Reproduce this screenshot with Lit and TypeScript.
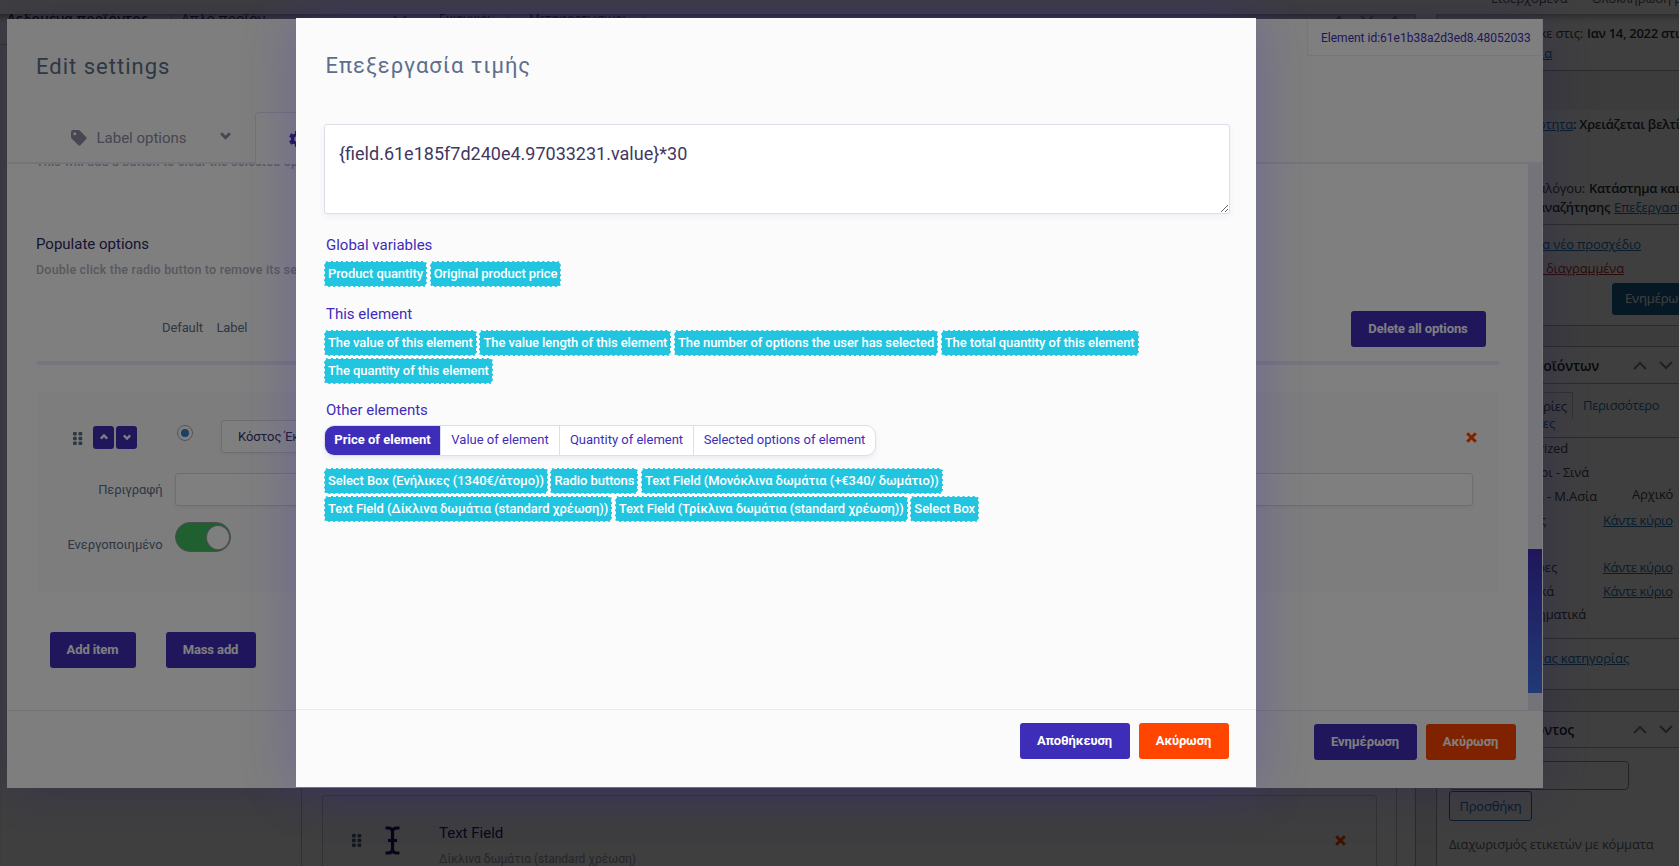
import { LitElement, html, css, svg, nothing } from "lit";
import { customElement } from "lit/decorators.js";

const chevron = (dir: "up" | "down", size = 10, width = 2.4) => html`
  <svg width=${size} height=${size} viewBox="0 0 10 10" fill="none" stroke="currentColor" stroke-width=${width}>
    ${dir === "up" ? svg`<path d="M1 7 L5 3 L9 7"/>` : svg`<path d="M1 3 L5 7 L9 3"/>`}
  </svg>`;

const wideChevron = (dir: "up" | "down") => html`
  <svg width="14" height="9" viewBox="0 0 14 9" fill="none" stroke="currentColor" stroke-width="2">
    ${dir === "up" ? svg`<path d="M1 8 L7 2 L13 8"/>` : svg`<path d="M1 1 L7 7 L13 1"/>`}
  </svg>`;

const dots = html`
  <svg width="10" height="13" viewBox="0 0 10 13" fill="currentColor">
    ${[0, 4.7, 9.4].map((y) => [0, 5.5].map((x) => svg`<rect x=${x} y=${y} width="3.8" height="3.6" rx="1"/>`))}
  </svg>`;

const cross = html`
  <svg width="11" height="11" viewBox="0 0 11 11" fill="none" stroke="currentColor" stroke-width="3">
    <path d="M1.2 1.2 L9.8 9.8 M9.8 1.2 L1.2 9.8"/>
  </svg>`;

type Row = {
  kind?: "line" | "gap";
  gap: number;
  h?: number;
  end?: number;
  frag?: string;
  fragCls?: string;
  offset?: number;
  next?: string;
  nextCls?: string;
};

const publishRows: Row[] = [
  { gap: 10, end: 146, frag: "κε στις:", offset: 4, next: "Ιαν 14, 2022 στις", nextCls: "strong" },
  { gap: 2, end: 115, frag: "Επεξεργασία", fragCls: "link" },
  { kind: "line", gap: 8 },
  { kind: "gap", gap: 0, h: 39 },
  { gap: 5, end: 136, frag: "Αναγνωσιμότητα", fragCls: "link", offset: 0, next: ": Χρειάζεται βελτίωση", nextCls: "strong" },
  { gap: 46, end: 148, frag: "καταλόγου:", offset: 4, next: "Κατάστημα και", nextCls: "strong" },
  { gap: 1, end: 173, frag: "αναζήτησης", fragCls: "strong", offset: 4, next: "Επεξεργασία", nextCls: "link" },
  { kind: "line", gap: 8 },
  { gap: 10, end: 204, frag: "Αντιγραφή σε ένα νέο προσχέδιο", fragCls: "link" },
  { gap: 6, end: 187, frag: "Μετακίνηση στα διαγραμμένα", fragCls: "danger" },
];

const categoryRows: Row[] = [
  { gap: 0, end: 118, frag: "χρησιμοποιούμενες", fragCls: "plain" },
  { kind: "line", gap: 5 },
  { gap: 1, end: 131, frag: "Uncategorized" },
  { gap: 6, end: 152, frag: "Προορισμοι - Σινά" },
  { gap: 6, end: 160, frag: "Αφρική - Μ.Ασία", fragCls: "medium", offset: 35, next: "Αρχικό", nextCls: "raised" },
  { gap: 6, end: 109, frag: "Χώρες", offset: 57, next: "Κάντε κύριο", nextCls: "link tight" },
  { gap: 29, end: 120, frag: "Ημέρες", offset: 46, next: "Κάντε κύριο", nextCls: "link tight" },
  { gap: 6, end: 117, frag: "Οδικά", offset: 49, next: "Κάντε κύριο", nextCls: "link tight" },
  { gap: 5, end: 149, frag: "Θεματικά ηματικά" },
  { kind: "line", gap: 15 },
  { gap: 10, end: 192, frag: "Προσθήκη νέας κατηγορίας", fragCls: "link medium" },
];

@customElement("product-page")
class ProductPage extends LitElement {
  static styles = css`
    :host { display: block; height: 866px; overflow: hidden; background: #f0f0f1; font: 13px "Open Sans", "Noto Sans", sans-serif; color: #3c434a; }
    .toolbar { height: 14px; background: #fff; overflow: hidden; display: flex; gap: 24px; padding-left: 1491px; white-space: nowrap; color: #50575e; letter-spacing: -.1px; }
    .toolbar span { margin-top: -11px; line-height: 18px; }
    .columns { display: grid; grid-template-columns: 1416px 1fr; column-gap: 20px; height: 852px; }
    .main { border-right: 1px solid #a9aaae; background: #fff; display: flex; flex-direction: column; justify-content: space-between; overflow: hidden; box-shadow: inset 0 8px 8px -6px rgba(0,0,0,.5); }
    .head { display: flex; box-sizing: border-box; height: 41px; white-space: nowrap; color: #1d2327; font-size: 14px; line-height: 16px; padding-bottom: 10px; margin-top: -10px; border-bottom: 1px solid #c3c4c7; align-items: center; }
    .head .title { font-weight: 600; width: 164px; padding-left: 7px; }
    .head .field { border-left: 1px solid #8c8f94; padding-left: 9px; width: 212px; }
    .head .dim { color: #50575e; width: 18px; }
    .head .box { border-left: 1px solid #8c8f94; width: 27px; }
    .head .opt { width: 54px; border-right: 1px solid #8c8f94; font-size: 12px; }
    .head .opt.wide { width: 114px; margin-left: 14px; padding-left: 20px; border-left: 1px solid #8c8f94; }
    .head .tools { margin-left: auto; display: flex; gap: 14px; padding-right: 13px; color: #787c82; }
    .builder { margin: 0 18px 0 301px; border: 1px solid #c3c4c7; border-bottom: 0; height: 140px; padding: 0 19px 0 20px; display: flex; align-items: flex-end; background: #fff; }
    .item { flex: 1; height: 70px; border: 1px solid #c9cacf; border-bottom: 0; border-radius: 4px 4px 0 0; display: flex; font-family: Roboto, sans-serif; background: #fcfcfd; }
    .item .grip { margin: 38px 23px 0 29px; color: #50607a; }
    .item .glyph { margin: 30px 39px 0 0; color: #1b1464; }
    .item .text { flex: 1; padding-top: 27px; }
    .item .name { font-size: 15px; line-height: 20px; color: #2a1f72; }
    .item .sub { font-size: 12px; line-height: 20px; margin-top: 6px; color: #9a99a8; white-space: nowrap; }
    .item .del { color: #ff4500; margin: 38px 30px 0 0; }
    .side { border-left: 1px solid #a9aaae; background: #fff; white-space: nowrap; overflow: hidden; box-shadow: inset 0 8px 8px -6px rgba(0,0,0,.4); letter-spacing: -.16px; }
    .row { display: flex; height: 18px; line-height: 18px; }
    .frag { display: flex; justify-content: flex-end; flex: none; }
    .line { height: 1px; background: #a9aaae; }
    .band { background: #f0f0f1; }
    .strong { font-weight: 600; color: #2c3338; letter-spacing: -.3px; }
    .medium { font-weight: 500; }
    .link { color: #2271b1; text-decoration: underline; }
    .tight { letter-spacing: -.35px; }
    .plain { color: #2271b1; }
    .danger { color: #b32d2e; text-decoration: underline; }
    .raised { margin-top: -2px; }
    .update { margin: 6px 0 10px 175px; height: 32px; line-height: 31px; padding-left: 13px; background: #1d6096; color: #fff; border-radius: 3px 0 0 3px; }
    .boxhead { display: flex; align-items: center; font-size: 14px; font-weight: 600; color: #1d2327; }
    .boxhead .arrows { display: flex; gap: 12px; color: #787c82; }
    .tabs { display: flex; height: 22px; margin-top: 8px; }
    .tab { height: 27px; line-height: 26px; border: 1px solid #c3c4c7; border-bottom: 0; width: 136px; box-sizing: border-box; display: flex; justify-content: flex-end; padding-right: 5px; margin-right: 10px; }
    .tabs .plain { line-height: 27px; letter-spacing: -.3px; }
    .input { margin: 13px 0 0 12px; width: 178px; height: 27px; border: 1px solid #8c8f94; border-radius: 4px; }
    .add { margin: 1px 0 14px 12px; width: 81px; height: 28px; line-height: 28px; border: 1px solid #2271b1; border-radius: 3px; color: #2271b1; text-align: center; }
    .hint { padding-left: 12px; line-height: 18px; color: #646970; }
  `;

  row(r: Row) {
    const style = `margin-top:${r.gap}px`;
    if (r.kind === "line") return html`<div class="line" style=${style}></div>`;
    if (r.kind === "gap") return html`<div class="band" style="height:${r.h}px"></div>`;
    return html`<div class="row" style=${style}>
      <div class="frag" style="width:${r.end}px"><span class=${r.fragCls ?? ""}>${r.frag}</span></div>
      ${r.next ? html`<span class=${r.nextCls ?? ""} style="margin-left:${r.offset}px">${r.next}</span>` : nothing}
    </div>`;
  }

  boxHead(text: string, end: number, height: number, arrows: number) {
    return html`<div class="boxhead" style="height:${height}px">
      <div class="frag" style="width:${end}px">${text}</div>
      <div class="arrows" style="margin-left:${arrows}px">${wideChevron("up")}${wideChevron("down")}</div>
    </div>`;
  }

  render() {
    return html`
      <div class="toolbar"><span>Εισερχόμενα</span><span>Ολοκλήρωση βιτρίνας</span></div>
      <div class="columns">
        <div class="main">
          <div class="head">
            <span class="title">Δεδομένα προϊόντος —</span>
            <span class="field">Απλό προϊόν</span>
            <span class="dim">${wideChevron("down")}</span>
            <span class="box"></span>
            <span class="opt">Εικονικό:</span>
            <span class="opt wide">Μεταφορτώσιμο:</span>
            <span class="tools">${wideChevron("up")}${wideChevron("down")}${wideChevron("up")}</span>
          </div>
          <div class="builder">
            <div class="item">
              <span class="grip">${dots}</span>
              <span class="glyph">
                <svg width="15" height="29" viewBox="0 0 15 29" fill="none" stroke="currentColor" stroke-width="3.2">
                  <path d="M0.5 2 H3 Q7.5 2 7.5 6 Q7.5 2 12 2 H14.5 M7.5 5 V24 M0.5 27 H3 Q7.5 27 7.5 23 Q7.5 27 12 27 H14.5 M3 14.5 H12"/>
                </svg>
              </span>
              <div class="text">
                <div class="name">Text Field</div>
                <div class="sub">Δίκλινα δωμάτια (standard χρέωση)</div>
              </div>
              <span class="del">${cross}</span>
            </div>
          </div>
        </div>
        <div class="side">
          ${publishRows.map((r) => this.row(r))}
          <div class="update">Ενημέρωση</div>
          <div class="line"></div>
          <div class="band" style="height:20px"></div>
          <div class="line"></div>
          ${this.boxHead("Κατηγορίες προϊόντων", 162, 36, 34)}
          <div class="line"></div>
          <div class="tabs"><div class="tab">Όλες οι κατηγορίες</div><span class="plain">Περισσότερο</span></div>
          ${categoryRows.map((r) => this.row(r))}
          <div class="line" style="margin-top:22px"></div>
          <div class="band" style="height:21px"></div>
          <div class="line"></div>
          ${this.boxHead("Ετικέτες προϊόντος", 137, 35, 59)}
          <div class="line"></div>
          <div class="input"></div>
          <div class="add">Προσθήκη</div>
          <div class="hint">Διαχωρισμός ετικετών με κόμματα</div>
        </div>
      </div>
    `;
  }
}

const buttonStyles = css`
  .btn { display: inline-flex; align-items: center; justify-content: center; height: 36px; box-sizing: border-box; border-radius: 3px; background: #3e2db8; color: #fff; font-size: 13px; font-weight: 700; letter-spacing: -0.12px; padding-bottom: 1px; padding-right: 1px; }
  .btn.cancel { background: #ff4500; }
`;

@customElement("settings-panel")
class SettingsPanel extends LitElement {
  static styles = [buttonStyles, css`
    :host { display: flex; flex-direction: column; width: 1536px; height: 769px; background: #fdfdfd; font: 13px/20px Roboto, sans-serif; color: #5d6f87; box-shadow: 0 0 50px rgba(62,45,184,.3); overflow: hidden; }
    .header { height: 93px; display: flex; justify-content: space-between; background: #fdfdfd; flex: none; }
    .title { font-size: 22px; line-height: 26px; letter-spacing: 1px; padding: 35px 0 0 29px; color: #5d6f87; }
    .ident { height: 37px; line-height: 38px; font-size: 12px; letter-spacing: 0; border: 1px solid #eeedf4; border-top: 0; box-sizing: border-box; width: 236px; padding-left: 13px; color: #3e2db8; background: #fff; white-space: nowrap; }
    .tabs { height: 50px; display: flex; border-bottom: 2px solid #ebe9f5; flex: none; color: #8f8ca4; font-size: 15px; }
    .tab { display: flex; align-items: center; width: 184px; padding-left: 64px; padding-top: 1px; }
    .tab .name { margin-left: 9.5px; width: 123px; }
    .tab .name + svg { margin-top: -4px; }
    .tab.on { border: 1px solid #e4e2f2; border-bottom: 0; border-radius: 4px 0 0 0; background: #fff; color: #3e2db8; margin-bottom: -2px; padding-left: 33px; }
    .body { flex: 1; display: flex; background: #fff; min-height: 0; }
    .content { flex: 1; min-width: 0; padding: 0 29px 0 30px; overflow: hidden; }
    .note { color: #b1b0bd; font-size: 12.5px; font-weight: 500; letter-spacing: .2px; white-space: nowrap; margin-left: -1px; }
    .clip { margin-top: -12px; }
    .subtitle { color: #2e2860; font-size: 15px; margin: 62px 0 0 -1px; }
    .tools { height: 36px; display: flex; margin-top: 31px; padding: 0 13px 0 125px; }
    .tools span { line-height: 20px; padding-top: 7px; margin-right: 13.5px; font-weight: 400; letter-spacing: -.1px; }
    .tools .btn { margin-left: auto; width: 135px; }
    .rule { height: 4px; background: #eeebfa; margin-top: 14px; }
    .panel { margin-top: 27px; background: #fbfbfc; height: 201px; box-sizing: border-box; padding-top: 28px; display: flex; flex-direction: column; gap: 20px; }
    .line { display: flex; height: 33px; align-items: center; }
    .grip { margin: 3px 10px 0 36px; display: flex; }
    .mini { width: 21px; height: 23px; background: #3e2db8; color: #fff; border-radius: 3px; margin: 1px 2px 0 0; display: flex; align-items: center; justify-content: center; }
    .radio { width: 14px; height: 14px; border: 1px solid #aaa; border-radius: 50%; margin: -7px 28px 0 38px; display: flex; align-items: center; justify-content: center; background: #fff; }
    .radio i { width: 8px; height: 8px; border-radius: 50%; background: #3582c4; }
    .input { flex: 1; height: 33px; box-sizing: border-box; border: 1px solid #dcdbe6; border-radius: 3px; background: #fff; box-shadow: 0 2px 4px rgba(60,60,100,.06); color: #3a3462; font-size: 13px; letter-spacing: -.1px; padding: 6px 0 0 16px; margin-right: 26px; }
    .del { color: #ff4500; margin: 2px 22px 0 0; display: flex; }
    .short { flex: 0 0 400px; margin-right: auto; }
    .label { width: 125.5px; text-align: right; margin-right: 12.5px; letter-spacing: -.1px; }
    .label.low { padding-top: 5px; }
    .switch { width: 56px; height: 30px; box-sizing: border-box; border: 1px solid #999; border-radius: 15px; background: #3ebe60; display: flex; justify-content: flex-end; align-items: center; margin-top: -11px; }
    .switch i { width: 24px; height: 25px; border-radius: 50%; background: #fff; border: 1px solid #999; box-sizing: border-box; }
    .actions { display: flex; gap: 30px; padding: 39px 13px 0; }
    .track { width: 14px; background: #e9e7f2; margin-right: 1px; display: flex; flex-direction: column; justify-content: flex-end; }
    .thumb { height: 144px; margin-bottom: 17px; background: linear-gradient(#3e2db8, #4374ea); }
    .footer { height: 78px; flex: none; background: #fdfdfd; border-top: 1px solid #e6e5ec; display: flex; justify-content: flex-end; gap: 9px; padding: 13px 27px 0 0; box-sizing: border-box; }
  `];

  render() {
    return html`
      <div class="header">
        <div class="title">Edit settings</div>
        <div class="ident">Element id:61e1b38a2d3ed8.48052033</div>
      </div>
      <div class="tabs">
        <div class="tab">
          <svg width="16" height="16" viewBox="0 0 16 16" fill="currentColor"><path fill-rule="evenodd" d="M0 2 Q0 0 2 0 H7 Q8 0 9 .8 L15.3 7.2 Q16 8 15.3 9 L9.4 15.2 Q8.400 16 7.400 15.2 L.8 8.700 Q0 8 0 7 Z M3.800 2.200 A1.500 1.500 0 1 0 3.800 5.200 A1.500 1.500 0 1 0 3.800 2.200 Z"/></svg>
          <span class="name">Label options</span>${chevron("down", 11, 2.6)}
        </div>
        <div class="tab on">
          <svg width="16" height="16" viewBox="0 0 16 16" fill="none" stroke="currentColor"><circle cx="8" cy="8" r="4.400" stroke-width="3.400"/><path stroke-width="4" d="M8 0 V3 M8 13 V16 M1.100 4 L3.700 5.500 M12.300 10.500 L14.900 12 M1.100 12 L3.700 10.500 M12.300 5.500 L14.900 4"/></svg>
        </div>
      </div>
      <div class="body">
        <div class="content">
          <div class="note clip">This will add a button to clear the selected option.</div>
          <div class="subtitle">Populate options</div>
          <div class="note" style="margin-top:6px">Double click the radio button to remove its selected status.</div>
          <div class="tools"><span>Default</span><span>Label</span><div class="btn">Delete all options</div></div>
          <div class="rule"></div>
          <div class="panel">
            <div class="line">
              <span class="grip">${dots}</span>
              <span class="mini">${chevron("up", 8, 2.8)}</span><span class="mini">${chevron("down", 8, 2.8)}</span>
              <span class="radio"><i></i></span>
              <div class="input short">Κόστος Έκδοσης</div>
              <span class="del">${cross}</span>
            </div>
            <div class="line"><span class="label">Περιγραφή</span><div class="input"></div></div>
            <div class="line"><span class="label low">Ενεργοποιημένο</span><span class="switch"><i></i></span></div>
          </div>
          <div class="actions"><div class="btn" style="width:86px">Add item</div><div class="btn" style="width:90px">Mass add</div></div>
        </div>
        <div class="track"><div class="thumb"></div></div>
      </div>
      <div class="footer">
        <div class="btn" style="width:103px">Ενημέρωση</div>
        <div class="btn cancel" style="width:90px">Ακύρωση</div>
      </div>
    `;
  }
}

@customElement("price-dialog")
class PriceDialog extends LitElement {
  static styles = [buttonStyles, css`
    :host { display: flex; flex-direction: column; width: 960px; height: 769px; background: #fbfbfc; font: 13px/20px Roboto, sans-serif; color: #3e2db8; box-shadow: 0 0 50px rgba(62,45,184,.3); }
    .title { font-size: 22px; line-height: 26px; letter-spacing: 1px; padding: 35px 0 0 29.5px; height: 71px; color: #5d6f8d; }
    .body { flex: 1; padding: 0 26px 0 28px; }
    .formula { display: block; width: 906px; height: 90px; box-sizing: border-box; border: 1px solid #dfdee8; border-radius: 3px; background: #fff; box-shadow: 0 3px 6px rgba(60,50,120,.06); padding: 18px 14px; font: 18px/22px Roboto, sans-serif; color: #41375f; margin: 0; resize: vertical; outline: 0; }
    .heading { font-size: 15px; line-height: 20px; margin: 21px 0 6px 2px; }
    .chips { display: flex; flex-wrap: wrap; gap: 2px 2.6px; width: 830px; }
    .chip { height: 26px; box-sizing: border-box; border: 1px dashed #fbfbfc; border-radius: 4px; background: #22c5e0; color: #fff; font-weight: 500; line-height: 23px; padding: 0 3px; white-space: nowrap; letter-spacing: -.07px; }
    .seg { display: inline-flex; border: 1px solid #dfdee8; border-radius: 10px; height: 31px; box-sizing: border-box; overflow: hidden; background: #fff; box-shadow: 0 3px 5px rgba(60,50,120,.07); margin-bottom: 12px; vertical-align: top; }
    .seg span { line-height: 27px; text-align: center; border-left: 1px solid #dfdee8; white-space: nowrap; box-sizing: border-box; }
    .seg .on { background: #3e2db8; color: #fff; font-weight: 700; border: 0; }
    .footer { height: 78px; border-top: 1px solid #ebebee; display: flex; justify-content: flex-end; gap: 9px; padding: 13px 27px 0 0; box-sizing: border-box; }
  `];

  private segments: [string, number][] = [
    ["Price of element", 115],
    ["Value of element", 119],
    ["Quantity of element", 134],
    ["Selected options of element", 182],
  ];

  chips(names: string[]) {
    return html`<div class="chips">${names.map((n) => html`<span class="chip">${n}</span>`)}</div>`;
  }

  render() {
    return html`
      <div class="title">Επεξεργασία τιμής</div>
      <div class="body">
        <textarea class="formula" spellcheck="false" .value=${"{field.61e185f7d240e4.97033231.value}*30"}></textarea>
        <div class="heading">Global variables</div>
        ${this.chips(["Product quantity", "Original product price"])}
        <div class="heading" style="margin-top:17px">This element</div>
        ${this.chips([
          "The value of this element",
          "The value length of this element",
          "The number of options the user has selected",
          "The total quantity of this element",
          "The quantity of this element",
        ])}
        <div class="heading" style="margin-top:16px;margin-bottom:5px">Other elements</div>
        <div class="seg">${this.segments.map(([n, w], i) => html`<span class=${i ? "" : "on"} style="width:${w}px">${n}</span>`)}</div>
        ${this.chips([
          "Select Box (Ενήλικες (1340€/άτομο))",
          "Radio buttons",
          "Text Field (Μονόκλινα δωμάτια (+€340/ δωμάτιο))",
          "Text Field (Δίκλινα δωμάτια (standard χρέωση))",
          "Text Field (Τρίκλινα δωμάτια (standard χρέωση))",
          "Select Box",
        ])}
      </div>
      <div class="footer">
        <div class="btn" style="width:110px">Αποθήκευση</div>
        <div class="btn cancel" style="width:90px">Ακύρωση</div>
      </div>
    `;
  }
}

@customElement("app-root")
class AppRoot extends LitElement {
  static styles = css`
    :host { display: block; position: relative; width: 1679px; height: 866px; overflow: hidden; }
    .veil { position: absolute; inset: 0; background: rgba(0,0,0,.5); }
    .settings { position: absolute; left: 7px; top: 19px; }
    .dialog { position: absolute; left: 296px; top: 18px; }
  `;

  render() {
    return html`
      <product-page></product-page>
      <div class="veil"></div>
      <settings-panel class="settings"></settings-panel>
      <div class="veil"></div>
      <price-dialog class="dialog"></price-dialog>
    `;
  }
}
